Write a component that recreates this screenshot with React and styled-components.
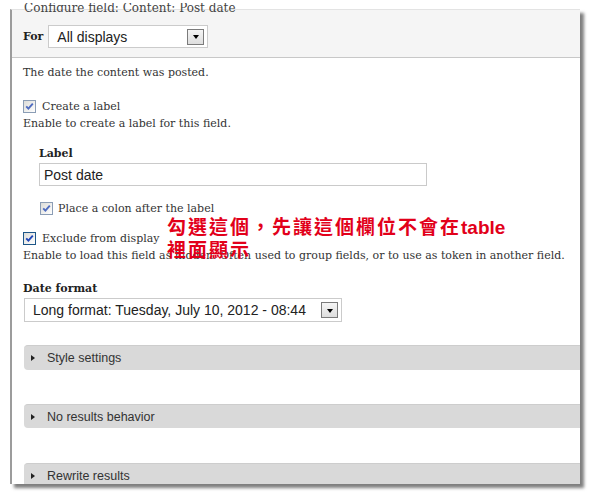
import React from "react";
import styled, { createGlobalStyle } from "styled-components";

const Global = createGlobalStyle`
  html, body { margin: 0; padding: 0; background: #fff; overflow: hidden; }
  body { width: 591px; height: 495px; }
`;

const serif = `"DejaVu Serif", "Liberation Serif", serif`;
const sans = `"Liberation Sans", Arial, sans-serif`;

const Page = styled.div`
  display: flex;
  flex-direction: column;
  padding-left: 10px;
  width: 570px;
`;

const TitleClip = styled.div`
  position: relative;
  z-index: 2;
  height: 9px;
  margin: 3px 0 -3px 14px;
  overflow: hidden;
`;

const Title = styled.div`
  font-family: ${serif};
  font-size: 12px;
  line-height: 14px;
  color: #444;
  margin-top: -2px;
  white-space: nowrap;
`;

const Window = styled.div`
  position: relative;
  height: 474px;
  border-top: 1px solid #e3e3e3;
  border-left: 2px solid #9c9c9c;
  background: #fff;
  overflow: hidden;
  box-shadow: 4px 4px 3px rgba(0, 0, 0, 0.5);
`;

const Header = styled.div`
  display: flex;
  align-items: center;
  gap: 5px;
  padding: 15px 0 9px 11px;
  background: #f5f5f5;
  border-bottom: 1px solid #c8c8c8;
`;

const Bold = styled.div`
  font-family: ${serif};
  font-weight: bold;
  font-size: 11px;
  line-height: 17px;
  color: #222;
  margin-top: ${(p) => p.$mt || 0}px;
`;

const Select = styled.div`
  box-sizing: border-box;
  display: flex;
  align-items: center;
  justify-content: space-between;
  width: ${(p) => p.$w}px;
  height: ${(p) => p.$h || 23}px;
  margin-top: ${(p) => p.$mt || 0}px;
  margin-left: ${(p) => p.$ml || 0}px;
  padding: 0 3px 0 8px;
  border: 1px solid #cbcbcb;
  background: #fff;
  font-family: ${sans};
  font-size: 14px;
  color: #222;
  white-space: nowrap;
`;

const DropBtn = styled.span`
  box-sizing: border-box;
  width: 17px;
  height: 16px;
  border: 1px solid #7b7b7b;
  background: linear-gradient(#f5f5f5, #dedede);
  display: flex;
  align-items: center;
  justify-content: center;
  &::after {
    content: "";
    border-left: 3.5px solid transparent;
    border-right: 3.5px solid transparent;
    border-top: 4px solid #000;
    margin-top: 1px;
  }
`;

const Body = styled.div`
  padding: 6px 0 0 11px;
  display: flex;
  flex-direction: column;
  align-items: flex-start;
`;

const Text = styled.div`
  font-family: ${serif};
  font-size: 11px;
  line-height: 17px;
  color: #333;
  margin-top: ${(p) => p.$mt || 0}px;
  white-space: nowrap;
`;

const CheckRow = styled.div`
  display: flex;
  align-items: center;
  gap: ${(p) => p.$gap || 6}px;
  height: 17px;
  margin-top: ${(p) => p.$mt || 0}px;
  margin-left: ${(p) => p.$ml || 0}px;
  font-family: ${serif};
  font-size: 11px;
  color: #333;
  white-space: nowrap;
`;

const Box = styled.span`
  box-sizing: border-box;
  width: 13px;
  height: 13px;
  border: 1px solid ${(p) => (p.$strong ? "#1d5687" : "#8b9db5")};
  background: linear-gradient(135deg, #dcdcd8, #ffffff);
  display: flex;
  align-items: center;
  justify-content: center;
`;

const Check = ({ strong }) => (
  <Box $strong={strong}>
    <svg width="11" height="11" viewBox="0 0 11 11">
      <path
        d="M2.2 5.4 L4.4 7.7 L8.8 2.6"
        fill="none"
        stroke={strong ? "#2146b8" : "#4f6cc0"}
        strokeWidth="1.9"
      />
    </svg>
  </Box>
);

const Indent = styled.div`
  display: flex;
  flex-direction: column;
  align-items: flex-start;
  padding-left: 16px;
  margin-top: ${(p) => p.$mt || 0}px;
`;

const TextInput = styled.div`
  box-sizing: border-box;
  width: 388px;
  height: 23px;
  margin-top: 1px;
  padding-left: 4px;
  border: 1px solid #cacaca;
  display: flex;
  align-items: center;
  font-family: ${sans};
  font-size: 14px;
  color: #222;
`;

const Fieldset = styled.div`
  box-sizing: border-box;
  align-self: stretch;
  display: flex;
  align-items: center;
  gap: 12px;
  height: ${(p) => p.$h}px;
  margin-top: ${(p) => p.$mt}px;
  margin-left: 1px;
  padding-left: 7px;
  background: #d9d9d9;
  border-top: 1px solid #cdcdcd;
  border-radius: 4px 0 0 4px;
  font-family: ${sans};
  font-size: 12.5px;
  color: #333;
  &::before {
    content: "";
    border-left: 4px solid #222;
    border-top: 3px solid transparent;
    border-bottom: 3px solid transparent;
  }
`;

const Note = styled.div`
  position: absolute;
  left: 155px;
  top: 205px;
  z-index: 3;
  font-family: "Noto Sans CJK TC", "Noto Sans CJK SC", sans-serif;
  font-weight: bold;
  font-size: 19px;
  line-height: 21px;
  color: #e2001a;
  white-space: nowrap;
`;

const Cjk = styled.span`
  letter-spacing: 2px;
`;

const Latin = styled.span`
  font-family: ${sans};
  font-weight: bold;
`;

export default function App() {
  return (
    <>
      <Global />
      <Page>
        <TitleClip>
          <Title>Configure field: Content: Post date</Title>
        </TitleClip>
        <Window>
          <Header>
            <Bold>For</Bold>
            <Select $w={160}>
              All displays
              <DropBtn />
            </Select>
          </Header>
          <Body>
            <Text>The date the content was posted.</Text>
            <CheckRow $mt={17}>
              <Check />
              Create a label
            </CheckRow>
            <Text>Enable to create a label for this field.</Text>
            <Indent $mt={13}>
              <Bold>Label</Bold>
              <TextInput>Post date</TextInput>
              <CheckRow $mt={14} $ml={1} $gap={5}>
                <Check />
                Place a colon after the label
              </CheckRow>
            </Indent>
            <CheckRow $mt={13}>
              <Check strong />
              Exclude from display
            </CheckRow>
            <Text>
              Enable to load this field as hidden. Often used to group fields, or to use as token in another field.
            </Text>
            <Bold $mt={16}>Date format</Bold>
            <Select $w={318} $h={24} $mt={1} $ml={1}>
              Long format: Tuesday, July 10, 2012 - 08:44
              <DropBtn />
            </Select>
            <Fieldset $h={25} $mt={23}>Style settings</Fieldset>
            <Fieldset $h={24} $mt={34}>No results behavior</Fieldset>
            <Fieldset $h={24} $mt={35}>Rewrite results</Fieldset>
          </Body>
          <Note>
            <Cjk>勾選這個，先讓這個欄位不會在</Cjk>
            <Latin>table</Latin>
            <br />
            <Cjk>裡面顯示</Cjk>
          </Note>
        </Window>
      </Page>
    </>
  );
}
